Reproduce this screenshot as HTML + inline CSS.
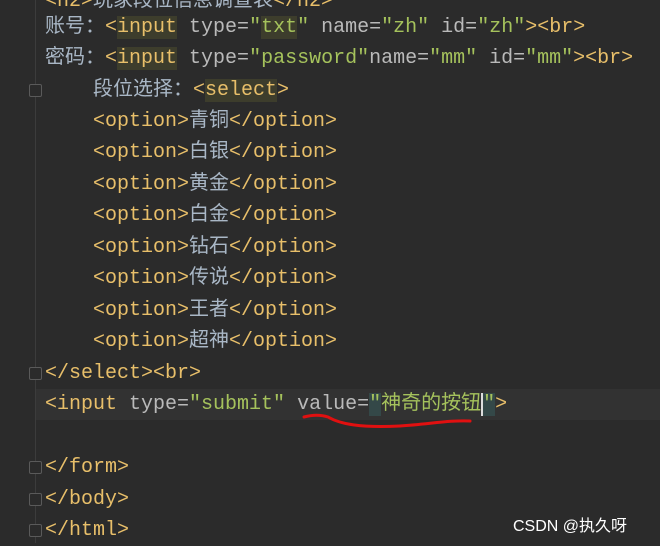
<!DOCTYPE html>
<html><head><meta charset="utf-8"><style>
body{margin:0;width:660px;height:543px;background:#2b2b2b;overflow:hidden;position:relative;font-family:"Liberation Mono","Noto Sans CJK SC",monospace;font-size:20px;}
.gut{position:absolute;left:35px;top:0;width:1px;height:543px;background:#3c3c3c}
.l{position:absolute;left:45px;height:31px;line-height:31px;white-space:pre;color:#a9b7c6}
.t{color:#e8bf6a}.a{color:#bababa}.s{color:#a5c25c}.h{background:#3d3d2c}
.cur{position:absolute;left:36px;top:389px;width:624px;height:31px;background:#323232}
.f{position:absolute;left:29px;width:11px;height:11px;border:1px solid #5a5a5a;border-radius:2px;background:#2b2b2b}
.wm{position:absolute;left:513px;top:512px;color:#fff;font-family:"Liberation Sans","Noto Sans CJK SC",sans-serif;font-size:16px}
</style></head><body>
<div class="gut"></div>
<div class="cur"></div>
<div class="l" style="top:-14px"><span class="t">&lt;h2&gt;</span>玩家段位信息调查表<span class="t">&lt;/h2&gt;</span></div>
<div class="l" style="top:12px">账号：<span class="t">&lt;<span class="h">input</span></span> <span class="a">type=</span><span class="s">"<span class="h">txt</span>"</span> <span class="a">name=</span><span class="s">"zh"</span> <span class="a">id=</span><span class="s">"zh"</span><span class="t">&gt;&lt;br&gt;</span></div>
<div class="l" style="top:43px">密码：<span class="t">&lt;<span class="h">input</span></span> <span class="a">type=</span><span class="s">"password"</span><span class="a">name=</span><span class="s">"mm"</span> <span class="a">id=</span><span class="s">"mm"</span><span class="t">&gt;&lt;br&gt;</span></div>
<div class="f" style="top:84px"></div>
<div class="l" style="top:75px">    段位选择：<span class="t">&lt;<span class="h">select</span>&gt;</span></div>
<div class="l" style="top:106px">    <span class="t">&lt;option&gt;</span>青铜<span class="t">&lt;/option&gt;</span></div>
<div class="l" style="top:137px">    <span class="t">&lt;option&gt;</span>白银<span class="t">&lt;/option&gt;</span></div>
<div class="l" style="top:169px">    <span class="t">&lt;option&gt;</span>黄金<span class="t">&lt;/option&gt;</span></div>
<div class="l" style="top:200px">    <span class="t">&lt;option&gt;</span>白金<span class="t">&lt;/option&gt;</span></div>
<div class="l" style="top:232px">    <span class="t">&lt;option&gt;</span>钻石<span class="t">&lt;/option&gt;</span></div>
<div class="l" style="top:263px">    <span class="t">&lt;option&gt;</span>传说<span class="t">&lt;/option&gt;</span></div>
<div class="l" style="top:295px">    <span class="t">&lt;option&gt;</span>王者<span class="t">&lt;/option&gt;</span></div>
<div class="l" style="top:326px">    <span class="t">&lt;option&gt;</span>超神<span class="t">&lt;/option&gt;</span></div>
<div class="f" style="top:367px"></div>
<div class="l" style="top:358px"><span class="t">&lt;/select&gt;&lt;br&gt;</span></div>
<div class="l" style="top:389px"><span class="t">&lt;input</span> <span class="a">type=</span><span class="s">"submit"</span> <span class="a">value=</span><span class="s"><span style="background:#344848">"</span>神奇的按钮<span style="border-left:2px solid #ddd;background:#344848">"</span></span><span class="t">&gt;</span></div>
<svg style="position:absolute;left:0;top:0" width="660" height="543"><path d="M304 417 C315 414,322 415,328 417 C340 424,360 428,400 426 C430 424,450 420,470 421" stroke="#e01010" stroke-width="3" fill="none" stroke-linecap="round"/></svg>
<div class="f" style="top:461px"></div>
<div class="l" style="top:452px"><span class="t">&lt;/form&gt;</span></div>
<div class="f" style="top:493px"></div>
<div class="l" style="top:484px"><span class="t">&lt;/body&gt;</span></div>
<div class="f" style="top:524px"></div>
<div class="l" style="top:515px"><span class="t">&lt;/html&gt;</span></div>
<div class="wm">CSDN @执久呀</div>
</body></html>
